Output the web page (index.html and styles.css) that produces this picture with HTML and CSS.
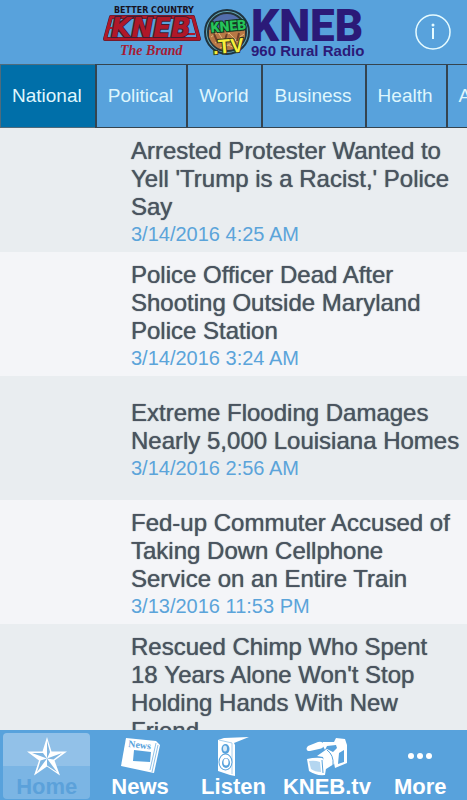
FILE: index.html
```html
<!DOCTYPE html>
<html lang="en">
<head>
<meta charset="utf-8">
<meta name="viewport" content="width=device-width, initial-scale=1">
<title>KNEB News</title>
<link rel="stylesheet" href="styles.css">
</head>
<body>
<div class="app">
  <header class="header">
    <svg class="logo" width="264" height="64" viewBox="0 0 264 64" role="img" aria-label="KNEB stations">
      <!-- Better Country KNEB The Brand -->
      <text class="logo-country" x="12" y="13">BETTER COUNTRY</text>
      <path d="M9 17H91L97 39H3Z" fill="none" stroke="#401c30" stroke-width="4" stroke-linejoin="round"/>
      <path d="M9 17H91L97 39H3Z" fill="none" stroke="#b01828" stroke-width="3" stroke-linejoin="round"/>
      <path d="M6 28H13M84 34H93" stroke="#b01828" stroke-width="2"/>
      <text class="logo-brand" x="9" y="37">KNEB</text>
      <text class="logo-script" x="18" y="55">The Brand</text>
      <!-- KNEB.TV badge -->
      <circle cx="125" cy="32" r="22" fill="#65a9b7" stroke="#1f3440" stroke-width="2"/>
      <circle cx="125" cy="32" r="19" fill="#536eac" stroke="#253439" stroke-width="2"/>
      <path d="M107 30q18-5 36 0v7q-5 13-18 13t-18-13Z" fill="#b87845"/>
      <path d="M109 37l7-5 5 8 6-7 7 7 8-6M113 43l7-4 5 7 8-6 6 4M118 48l8-3 7 3" fill="none" stroke="#e0ba78" stroke-width="1"/>
      <path d="M112 34l4 9M125 34l-3 8M137 33l-2 8" stroke="#6e402b" stroke-width="2"/>
      <text class="logo-green" x="109" y="31" transform="rotate(-5 126 32)">KNEB</text>
      <text class="logo-tv" x="111" y="53" transform="rotate(-5 126 50)">.TV</text>
      <!-- 960 Rural Radio -->
      <text class="logo-kneb" x="149" y="41">KNEB</text>
      <text class="logo-rural" x="149" y="56">960 Rural Radio</text>
    </svg>
    <button class="info" type="button" aria-label="Information">
      <svg width="36" height="36" viewBox="0 0 36 36" aria-hidden="true">
        <circle cx="18" cy="18" r="17" fill="none" stroke="#e6fbff" stroke-width="1.5"/>
        <path d="M18 14V25" stroke="#e6fbff" stroke-width="2"/>
        <circle cx="18" cy="11" r="1.5" fill="#e6fbff"/>
      </svg>
    </button>
  </header>

  <nav class="tabs" aria-label="Categories">
    <button class="tab tab-active" type="button">National</button>
    <button class="tab" type="button">Political</button>
    <button class="tab" type="button">World</button>
    <button class="tab" type="button">Business</button>
    <button class="tab" type="button">Health</button>
    <button class="tab" type="button">A</button>
  </nav>

  <main class="list">
    <article class="story">
      <h2 class="title">Arrested Protester Wanted to Yell 'Trump is a Racist,' Police Say</h2>
      <time class="date">3/14/2016 4:25 AM</time>
    </article>
    <article class="story">
      <h2 class="title">Police Officer Dead After Shooting Outside Maryland Police Station</h2>
      <time class="date">3/14/2016 3:24 AM</time>
    </article>
    <article class="story">
      <h2 class="title">Extreme Flooding Damages Nearly 5,000 Louisiana Homes</h2>
      <time class="date">3/14/2016 2:56 AM</time>
    </article>
    <article class="story">
      <h2 class="title">Fed-up Commuter Accused of Taking Down Cellphone Service on an Entire Train</h2>
      <time class="date">3/13/2016 11:53 PM</time>
    </article>
    <article class="story">
      <h2 class="title">Rescued Chimp Who Spent 18&nbsp;Years Alone Won't Stop Holding Hands With New Friend</h2>
    </article>
  </main>

  <nav class="bottom" aria-label="Main">
    <a class="item item-active" href="#home">
      <svg class="icon" width="44" height="40" viewBox="0 0 44 40" aria-hidden="true">
        <path d="M22 0L26.500 14.500H42L29.500 23.500L35 38.500L22 29.500L9 38.500L14 23.500L2 14.500H17.500Z" fill="#fff"/>
        <path d="M22 21.500V4L25 15ZM22 21.500L37 16L28.500 22.500ZM22 21.500L32 35L22 28.500ZM22 21.500L12 35L15.500 23.500ZM22 21.500L7 16H18Z" fill="#7fb6e2"/>
      </svg>
      <span class="label">Home</span>
    </a>
    <a class="item" href="#news">
      <svg class="icon" width="44" height="40" viewBox="0 0 44 40" aria-hidden="true">
        <path d="M8 1L38 4 42 8 36 36 31 35 3 29Z" fill="#fff"/>
        <path d="M38 6L32 33M40 8L34 35" stroke="#8fc1e8" stroke-width="1"/>
        <path d="M16 13L33 15 32 25 15 24Z" fill="#58a2dc"/>
        <text class="paper-name" x="10" y="10" transform="rotate(6 10 10)">News</text>
      </svg>
      <span class="label">News</span>
    </a>
    <a class="item" href="#listen">
      <svg class="icon" width="44" height="40" viewBox="0 0 44 40" aria-hidden="true">
        <path d="M7 3L13 1 38 0 23 6 24 8 24 39 19 38 7 34Z" fill="#fff"/>
        <path d="M8 3L21 6 21 37" fill="none" stroke="#a9d0ee" stroke-width="1"/>
        <ellipse cx="14.500" cy="12" rx="4" ry="5" fill="#58a2dc"/>
        <ellipse cx="14" cy="11.500" rx="2" ry="3" fill="#d8eaf8"/>
        <ellipse cx="14.500" cy="25" rx="7" ry="8.500" fill="#58a2dc"/>
        <ellipse cx="14.500" cy="25" rx="6" ry="7.500" fill="#fff"/>
        <ellipse cx="15" cy="26" rx="4" ry="5" fill="#58a2dc"/>
        <ellipse cx="15" cy="25" rx="2.500" ry="3.500" fill="#fff"/>
      </svg>
      <span class="label">Listen</span>
    </a>
    <a class="item" href="#tv">
      <svg class="icon" width="44" height="40" viewBox="0 0 44 40" aria-hidden="true">
        <path d="M3 14Q0 12 3 9L13 5Q18 4 19 8 19 11 14 12L5 14Z" fill="#fff"/>
        <path d="M18 5L29 5 31 1 40 2 42 8 42 26 30 31 27 16 32 11 31 8 22 9 20 13 18 9Z" fill="#fff"/>
        <path d="M34 16L39 13 39 25 33 27Z" fill="#58a2dc"/>
        <path d="M12 19L22 12 28 15Q32 22 29 27L21 32 18 20Z" fill="#fff"/>
        <path d="M22 13Q29 18 28 28" fill="none" stroke="#58a2dc" stroke-width="1"/>
        <path d="M2 22Q10 20 17 21L22 25 20 38Q11 39 4 34Z" fill="#fff"/>
        <path d="M4 24Q10 23 15 25L16 35Q10 35 6 32Z" fill="#b4d6f0"/>
        <path d="M17 23L18 36" stroke="#58a2dc" stroke-width="1"/>
      </svg>
      <span class="label">KNEB.tv</span>
    </a>
    <a class="item" href="#more">
      <svg class="icon" width="44" height="40" viewBox="0 0 44 40" fill="#fff" aria-hidden="true">
        <circle cx="13" cy="19" r="3"/><circle cx="22" cy="19" r="3"/><circle cx="31" cy="19" r="3"/>
      </svg>
      <span class="label">More</span>
    </a>
  </nav>
</div>
</body>
</html>
```
FILE: styles.css
```css
* { box-sizing: border-box; }

body {
  margin: 0;
  font-family: "Liberation Sans", Arial, sans-serif;
  background: #e9edf0;
}

.app {
  display: flex;
  flex-direction: column;
  height: 100vh;
  overflow: hidden;
}

.header {
  display: grid;
  grid-template-columns: 1fr auto 1fr;
  flex: none;
  height: 64px;
  background: #58a2dc;
}

.logo { grid-column: 2; }

.logo-country { font: bold 8px "DejaVu Sans", sans-serif; fill: #17131f; }
.logo-brand { font: italic bold 26px "DejaVu Sans", sans-serif; fill: #b01828; stroke: #401c30; stroke-width: 2px; paint-order: stroke; }
.logo-script { font: italic bold 14px "Liberation Serif", serif; fill: #a51c34; }
.logo-green { font: 900 14px Roboto, sans-serif; fill: #26c45a; stroke: #12351f; stroke-width: 2px; paint-order: stroke; }
.logo-tv { font: bold 20px "Liberation Sans", sans-serif; fill: #f5ee3b; stroke: #35381d; stroke-width: 2px; paint-order: stroke; }
.logo-kneb { font: 900 44px Roboto, sans-serif; fill: #2b1a78; }
.logo-rural { font: bold 15px "Liberation Sans", sans-serif; fill: #2b1a78; }

.info {
  justify-self: end;
  align-self: center;
  width: 36px;
  height: 36px;
  margin-right: 16px;
  padding: 0;
  border: 0;
  background: none;
}

.info svg { display: block; }

.tabs {
  display: flex;
  flex: none;
  height: 64px;
  overflow: hidden;
  background: #58a2dc;
}

.tab {
  flex: none;
  padding: 0 13px 0 11px;
  border: 1px solid #35444f;
  border-right-width: 0;
  border-left-width: 2px;
  background: #58a2dc;
  color: #dff6fd;
  font: 19px "Liberation Sans", Arial, sans-serif;
}

.tab-active {
  border-color: #4f6b7c;
  border-left-width: 1px;
  background: #006fa9;
}

.list {
  flex: 1;
  min-height: 0;
  overflow: hidden;
}

.story {
  display: flex;
  flex-direction: column;
  justify-content: center;
  min-height: 124px;
  padding: 9px 4px 5px 131px;
  background: #e9edf0;
}

.story:nth-child(even) { background: #f4f5f8; }

.title {
  margin: 0;
  color: #4a545f;
  font-size: 24px;
  font-weight: normal;
  line-height: 28px;
  text-shadow: 0 0 1px #4a545f;
}

.date {
  color: #5ba4da;
  font-size: 20px;
  line-height: 26px;
}

.bottom {
  display: grid;
  grid-template-columns: repeat(5, minmax(0, 1fr));
  flex: none;
  height: 70px;
  background: #58a2dc;
}

.item {
  display: flex;
  flex-direction: column;
  align-items: center;
  margin: 3px;
  padding-top: 4px;
  border-radius: 4px;
  color: #fff;
  text-decoration: none;
}

.item-active {
  background: linear-gradient(#92c1e8 50%, #7bb5e4 50%);
  color: #5ba1da;
}

.icon { flex: none; }

.label {
  margin-top: -2px;
  font-size: 22px;
  font-weight: bold;
  line-height: 24px;
}

.paper-name { font: bold 10px "Liberation Serif", serif; fill: #58a2dc; }
```
